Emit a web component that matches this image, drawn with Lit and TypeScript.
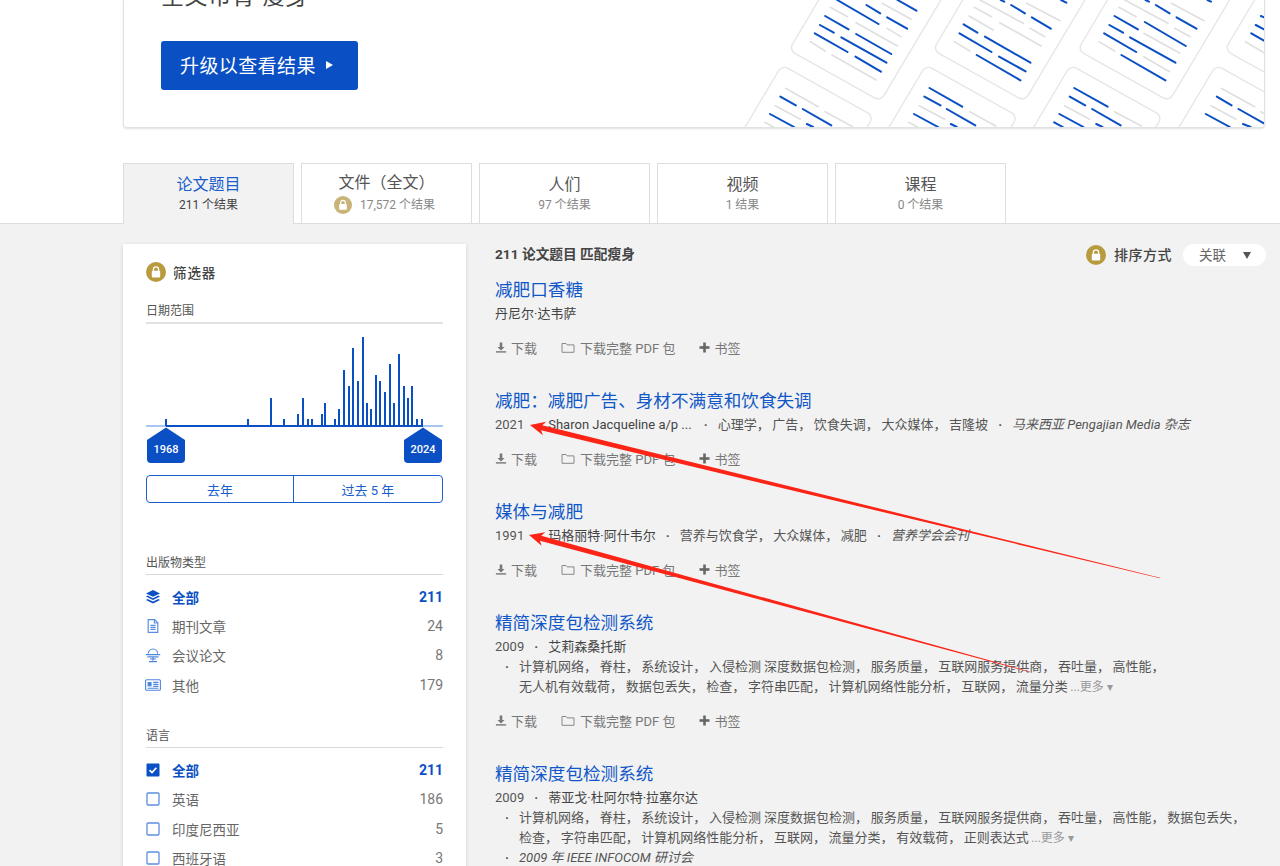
import {html, css, svg, LitElement} from 'lit';
import {customElement} from 'lit/decorators.js';

const BLUE = '#0a4fc4';

// [x, height] of the date histogram, x measured from the left of the panel content
const BARS = [
	[20, 7], [102, 7], [125, 28], [138, 7], [152, 12], [157, 28], [162, 7], [166, 7],
	[176, 12], [179, 23], [189, 7], [193, 17], [198, 56], [203, 40], [207, 78], [212, 45],
	[217, 89], [221, 23], [225, 17], [230, 51], [234, 45], [239, 34], [244, 62], [248, 23],
	[253, 72], [258, 40], [262, 28], [266, 40], [271, 7], [276, 7],
];

// hero pattern, in a 1524x381 box
const CARDS = [
	[145, 150, -400], [563, 150, -400], [983, 150, -400], [1410, 150, -400],
	[125, 195, 0], [543, 195, 0], [963, 195, 0], [1385, 195, 0],
];
const GREY_LINES = [
	[265, 22, 315, 50], [415, 10, 500, 58], [340, 68, 460, 138], [430, 85, 470, 110], [207, 125, 250, 153], [270, 165, 398, 240],
	[700, 0, 825, 70], [835, 10, 932, 62], [683, 22, 733, 50], [668, 48, 738, 90], [757, 68, 877, 138], [845, 85, 888, 110], [625, 125, 670, 153],
	[1103, 22, 1153, 50], [1255, 10, 1350, 62], [1045, 125, 1090, 153], [1175, 100, 1280, 160], [1175, 170, 1250, 215], [1265, 85, 1310, 110], [1120, 0, 1245, 70],
	[1470, 125, 1524, 158],
	[135, 265, 230, 320], [105, 317, 178, 358], [250, 335, 330, 380], [75, 367, 100, 381],
	[523, 317, 597, 358], [670, 335, 745, 378], [492, 367, 518, 381],
	[945, 317, 1018, 358], [1090, 335, 1168, 378],
	[1400, 265, 1497, 320], [1370, 317, 1443, 358], [1515, 335, 1524, 340],
];
const BLUE_LINES = [
	[285, 0, 405, 72], [370, 15, 410, 40], [460, 0, 515, 32], [430, 52, 488, 86], [250, 48, 318, 88], [235, 75, 275, 98],
	[220, 100, 315, 156], [340, 102, 442, 162], [297, 112, 428, 188], [338, 170, 412, 215],
	[790, 15, 830, 40], [850, 52, 905, 86], [652, 73, 692, 98], [640, 100, 733, 156], [714, 110, 846, 188], [755, 170, 832, 214], [690, 165, 817, 241], [760, 0, 770, 5], [935, 0, 950, 8],
	[1210, 15, 1250, 40], [1270, 52, 1328, 86], [1090, 48, 1158, 88], [1075, 75, 1115, 98], [1060, 100, 1153, 156], [1178, 66, 1297, 138], [1135, 112, 1267, 188], [1110, 165, 1238, 241], [1360, 0, 1370, 5], [1180, 0, 1190, 5],
	[1515, 48, 1524, 52], [1500, 75, 1524, 88], [1487, 100, 1524, 122],
	[120, 290, 165, 316], [185, 327, 268, 376], [90, 342, 160, 381], [197, 372, 215, 381],
	[553, 264, 648, 320], [538, 290, 585, 316], [603, 327, 686, 376], [508, 342, 578, 381], [615, 372, 632, 381],
	[973, 264, 1070, 320], [960, 290, 1005, 316], [1025, 327, 1108, 376], [930, 342, 1000, 381], [1037, 372, 1055, 381], [915, 367, 940, 381],
	[1387, 290, 1430, 316], [1450, 327, 1524, 370], [1355, 342, 1425, 381], [1463, 372, 1485, 381],
];

const TABS = [
	{label: '论文题目', sub: '211 个结果', active: true},
	{label: '文件（全文）', sub: '17,572 个结果', lock: true},
	{label: '人们', sub: '97 个结果'},
	{label: '视频', sub: '1 结果'},
	{label: '课程', sub: '0 个结果'},
];

const TYPES = [
	{icon: 'layers', label: '全部', count: 211, on: true},
	{icon: 'doc', label: '期刊文章', count: 24},
	{icon: 'conf', label: '会议论文', count: 8},
	{icon: 'news', label: '其他', count: 179},
];
const LANGS = [
	{icon: 'checked', label: '全部', count: 211, on: true},
	{icon: 'box', label: '英语', count: 186},
	{icon: 'box', label: '印度尼西亚', count: 5},
	{icon: 'box', label: '西班牙语', count: 3},
];

const KW_A = ['计算机网络', '脊柱', '系统设计', '入侵检测 深度数据包检测', '服务质量', '互联网服务提供商', '吞吐量', '高性能', '无人机有效载荷', '数据包丢失', '检查', '字符串匹配', '计算机网络性能分析', '互联网'];
const KW_B = ['计算机网络', '脊柱', '系统设计', '入侵检测 深度数据包检测', '服务质量', '互联网服务提供商', '吞吐量', '高性能', '数据包丢失', '检查', '字符串匹配', '计算机网络性能分析', '互联网', '流量分类', '有效载荷'];

function lock(size: number, color = '#b89b3f') {
	return html`<svg class="lock" width=${size} height=${size} viewBox="0 0 20 20">
		<circle cx="10" cy="10" r="10" fill=${color}></circle>
		<path d="M7.4 9V7.4a2.6 2.6 0 0 1 5.2 0V9" fill="none" stroke="#fff" stroke-width="1.3"></path>
		<rect x="5.8" y="8.8" width="8.4" height="6.6" rx="1" fill="#fff"></rect>
	</svg>`;
}

function sideIcon(name: string) {
	if (name === 'layers') return html`<svg class="si" viewBox="0 0 16 16" fill=${BLUE}>
		<path d="M8 1l7 3.4L8 7.8 1 4.4z"></path>
		<path d="M2.6 6.6L8 9.2l5.4-2.6L15 7.6l-7 3.4-7-3.4z"></path>
		<path d="M2.6 9.9L8 12.5l5.4-2.6 1.6 1-7 3.5-7-3.5z"></path>
	</svg>`;
	if (name === 'doc') return html`<svg class="si" viewBox="0 0 16 16" fill="none" stroke="#5c8ee0" stroke-width="1.2">
		<path d="M3.2 1.6h6.4l3.2 3.2v9.6H3.2z"></path>
		<path d="M9.4 1.6v3.4h3.4M5.4 7.4h5.2M5.4 9.4h5.2M5.4 11.4h5.2"></path>
	</svg>`;
	if (name === 'conf') return html`<svg class="si" viewBox="0 0 16 16" fill="none" stroke="#4f86dd" stroke-width="1.2">
		<path d="M3.4 6.6a4.6 4.6 0 0 1 9.2 0"></path>
		<path d="M.8 7.6h14.4M2.4 9.8h11.2M8 9.8v4M4 14.6h8M5 12h6"></path>
	</svg>`;
	if (name === 'news') return html`<svg class="si" viewBox="0 0 16 16" fill="none" stroke="#4f86dd" stroke-width="1.1">
		<rect x=".6" y="2.8" width="14.8" height="10.4" rx="1"></rect>
		<rect x="2.6" y="5" width="4" height="4.4" fill="#4f86dd" stroke="none"></rect>
		<path d="M8.2 5.4h5.2M8.2 7.4h5.2M8.2 9.4h5.2M2.6 11.3h10.8"></path>
	</svg>`;
	if (name === 'checked') return html`<svg class="si" viewBox="0 0 16 16">
		<rect x="1.5" y="1.5" width="13" height="13" rx="1" fill=${BLUE}></rect>
		<path d="M4.6 8.2l2.4 2.4 4.4-4.8" fill="none" stroke="#fff" stroke-width="1.7"></path>
	</svg>`;
	return html`<svg class="si" viewBox="0 0 16 16">
		<rect x="2" y="2" width="12" height="12" rx="1" fill="none" stroke="#5c8ee0" stroke-width="1.3"></rect>
	</svg>`;
}

const dlIcon = html`<svg class="ai" width="12" height="13" viewBox="0 0 12 13" fill="#777">
	<path d="M4.7 1.5h2.6v4.4h2.2L6 9.4 2.5 5.9h2.2z"></path><rect x=".9" y="10.2" width="10.2" height="1.4"></rect>
</svg>`;
const folderIcon = html`<svg class="ai fold" width="14" height="13" viewBox="0 0 14 13" fill="none" stroke="#888" stroke-width="1">
	<path d="M1 2.5h4l1.2 1.4H13v7.4H1z"></path>
</svg>`;
const plusIcon = html`<svg class="ai" width="11" height="11" viewBox="0 0 11 11" fill="#666">
	<rect x="4.2" y=".5" width="2.6" height="10"></rect><rect x=".5" y="4.2" width="10" height="2.6"></rect>
</svg>`;

// tapered arrow: broad at the tip, a hair at the tail
function arrow(tx: number, ty: number, ex: number, ey: number) {
	const len = Math.hypot(ex - tx, ey - ty);
	const ux = (ex - tx) / len, uy = (ey - ty) / len;
	const nx = -uy, ny = ux;
	const bx = tx + ux * 15, by = ty + uy * 15;
	const nk = tx + ux * 12, nl = ty + uy * 12;
	const p = (x: number, y: number, w: number) => `${x + nx * w},${y + ny * w}`;
	const pts = [`${tx},${ty}`, p(bx, by, 7), p(nk, nl, 2.6), p(ex, ey, 0.3), p(ex, ey, -0.3), p(nk, nl, -2.6), p(bx, by, -7)];
	return svg`<polygon points=${pts.join(' ')} fill="#fb2416"></polygon>`;
}

@customElement('app-root')
export class AppRoot extends LitElement {
	static styles = css`
		:host {
			display: block;
			position: relative;
			width: 1280px;
			height: 866px;
			overflow: hidden;
			background: #fff;
			font-family: Roboto, "Noto Sans CJK SC", sans-serif;
			font-size: 13px;
			color: #555;
			text-spacing-trim: space-all;
		}
		.hero {
			box-sizing: border-box;
			display: flex;
			justify-content: space-between;
			align-items: flex-end;
			width: 1142px;
			height: 128px;
			margin-left: 123px;
			border: 1px solid #e2e2e2;
			border-top: 0;
			border-radius: 0 0 4px 4px;
			box-shadow: 0 1px 2px rgba(0, 0, 0, 0.12);
			overflow: hidden;
		}
		.hero-left {
			align-self: flex-start;
			margin-left: 37px;
		}
		.hero-title {
			margin-top: -18px;
			font-size: 23px;
			letter-spacing: 0.6px;
			line-height: 30px;
			color: #444;
		}
		.upgrade {
			display: flex;
			align-items: center;
			gap: 10px;
			box-sizing: border-box;
			width: 197px;
			height: 49px;
			margin-top: 29px;
			padding: 0 0 2px 19px;
			background: #0a4fc4;
			border-radius: 3px;
			color: #fff;
			font-size: 19px;
			letter-spacing: 0.4px;
		}
		.pattern {
			display: block;
			flex: none;
		}
		.tabs {
			display: flex;
			gap: 7px;
			margin: 35px 0 0 123px;
			height: 60px;
		}
		.tab {
			box-sizing: border-box;
			width: 171px;
			height: 60px;
			display: flex;
			flex-direction: column;
			align-items: center;
			padding-top: 10px;
			border: 1px solid #ddd;
			border-bottom: 0;
			background: #fff;
		}
		.tab.locked {
			padding-top: 8px;
			gap: 2px;
		}
		.tab.active {
			background: #f2f2f2;
			height: 61px;
			position: relative;
			z-index: 1;
		}
		.tab-label {
			font-size: 16px;
			line-height: 22px;
			color: #555;
		}
		.active .tab-label {
			color: #1a5ecb;
		}
		.tab-sub {
			display: flex;
			align-items: center;
			gap: 8px;
			font-size: 12px;
			line-height: 18px;
			color: #888;
		}
		.locked .tab-sub {
			margin-left: -4px;
		}
		.active .tab-sub {
			color: #444;
		}
		.main {
			display: flex;
			gap: 29px;
			height: 643px;
			padding: 20px 0 0 123px;
			background: #f2f2f2;
			border-top: 1px solid #ddd;
			box-sizing: border-box;
		}
		.panel {
			box-sizing: border-box;
			flex: none;
			width: 343px;
			height: 700px;
			padding: 18px 23px 0;
			background: #fff;
			box-shadow: 0 1px 4px rgba(0, 0, 0, 0.14);
		}
		.filter-head {
			display: flex;
			align-items: center;
			gap: 7px;
			height: 20px;
			margin-bottom: 20px;
			font-size: 13.5px;
			letter-spacing: 0.9px;
			font-weight: 500;
			color: #444;
		}
		.heading {
			font-size: 12px;
			line-height: 18px;
			color: #555;
			padding-bottom: 2px;
			border-bottom: 1px solid #d8d8d8;
		}
		.heading.date {
			border-bottom: 2px solid #e2e2e2;
		}
		.chart {
			display: block;
			margin-bottom: 9px;
		}
		.chart text {
			font-size: 11px;
			font-weight: 500;
			fill: #fff;
			text-anchor: middle;
		}
		.ranges {
			display: flex;
			box-sizing: border-box;
			height: 28px;
			margin-bottom: 51px;
			border: 1px solid #1a5ecb;
			border-radius: 4px;
			color: #1a5ecb;
			font-size: 13px;
		}
		.ranges span {
			display: flex;
			align-items: center;
			justify-content: center;
		}
		.ranges span:first-child {
			width: 147px;
			box-sizing: border-box;
			border-right: 1px solid #1a5ecb;
		}
		.ranges span:last-child {
			flex: 1;
		}
		.list {
			margin: 7px 0 28px;
			font-size: 13.5px;
		}
		.row {
			display: flex;
			align-items: center;
			height: 29.33px;
			color: #666;
		}
		.row.on {
			color: #0a4fc4;
			font-weight: 700;
		}
		.si {
			flex: none;
			width: 16px;
			height: 16px;
			margin: 0 11px 0 -1px;
		}
		.count {
			margin-left: auto;
			color: #777;
			font-size: 14px;
		}
		.on .count {
			color: #0a4fc4;
		}
		.results {
			width: 771px;
			flex: none;
		}
		.results-head {
			display: flex;
			justify-content: space-between;
			height: 22px;
			margin-bottom: 10px;
		}
		.match {
			font-size: 13.7px;
			font-weight: 700;
			line-height: 20px;
			color: #444;
		}
		.sort {
			display: flex;
			align-items: center;
			gap: 8px;
			color: #444;
			font-size: 14px;
			letter-spacing: 0.5px;
			font-weight: 500;
			line-height: 20px;
		}
		.pill {
			display: flex;
			align-items: center;
			justify-content: space-between;
			box-sizing: border-box;
			width: 83px;
			height: 22px;
			margin-left: 3px;
			padding: 0 15px 0 16px;
			background: #fff;
			border-radius: 11px;
			color: #666;
			font-size: 13.5px;
			letter-spacing: 0;
			font-weight: 400;
		}
		.caret {
			width: 0;
			height: 0;
			border: 4px solid transparent;
			border-top: 7px solid #555;
			border-bottom: 0;
		}
		.item {
			margin-bottom: 29px;
		}
		.title {
			box-sizing: border-box;
			height: 26px;
			padding-top: 2px;
			font-size: 17.6px;
			line-height: 25px;
			color: #1057c8;
		}
		.meta {
			box-sizing: border-box;
			height: 22px;
			padding-top: 1px;
			line-height: 22px;
			color: #555;
			white-space: nowrap;
		}
		.dot {
			display: inline-block;
			width: 24px;
			text-align: center;
			font-weight: 700;
		}
		.author {
			color: #444;
		}
		.author.cut {
			padding-right: 2px;
		}
		.kw {
			display: inline-block;
			margin-right: 2.6px;
			white-space: nowrap;
		}
		.italic {
			font-style: italic;
		}
		.block {
			display: flex;
			line-height: 20px;
			width: 755px;
		}
		.block .dot {
			flex: none;
		}
		.more {
			color: #999;
			font-size: 12px;
			white-space: nowrap;
		}
		.actions {
			display: flex;
			gap: 24px;
			height: 22px;
			margin-top: 12px;
			color: #777;
		}
		.action {
			display: flex;
			align-items: center;
			gap: 4px;
		}
		.fold {
			margin-right: 1px;
		}
		.arrows {
			position: absolute;
			left: 0;
			top: 0;
			pointer-events: none;
		}
	`;

	renderPattern() {
		return html`<svg class="pattern" width="525" height="127" viewBox="0 0 1524 381" preserveAspectRatio="none">
			${CARDS.map(([x, y, top]) => svg`<rect x="0" y=${top} width="307" height="400" rx="20" fill="#fff" stroke="#e6e6e6" stroke-width="4"
				transform="translate(${x} ${y}) rotate(30)"></rect>`)}
			${GREY_LINES.map(([a, b, c, d]) => svg`<line x1=${a} y1=${b} x2=${c} y2=${d} stroke="#e0e0e0" stroke-width="5" stroke-linecap="round"></line>`)}
			${BLUE_LINES.map(([a, b, c, d]) => svg`<line x1=${a} y1=${b} x2=${c} y2=${d} stroke=${BLUE} stroke-width="6" stroke-linecap="round"></line>`)}
		</svg>`;
	}

	renderChart() {
		return html`<svg class="chart" width="297" height="142" viewBox="0 0 297 142">
			<rect x="0" y="101" width="297" height="2" fill="#a9c5f2"></rect>
			<rect x="20" y="101" width="257" height="2" fill=${BLUE}></rect>
			${BARS.map(([x, h]) => svg`<rect x=${x - 1} y=${102 - h} width="2" height=${h} fill=${BLUE}></rect>`)}
			<path d="M20 103.5L39 116v19a4 4 0 0 1-4 4H5a4 4 0 0 1-4-4V116z" fill=${BLUE}></path>
			<path d="M277 103.5L296 116v19a4 4 0 0 1-4 4h-30a4 4 0 0 1-4-4V116z" fill=${BLUE}></path>
			<text x="20" y="129">1968</text>
			<text x="277" y="129">2024</text>
		</svg>`;
	}

	renderRows(rows: typeof TYPES) {
		return html`<div class="list">
			${rows.map((r) => html`<div class="row ${r.on ? 'on' : ''}">
				${sideIcon(r.icon)}<span>${r.label}</span><span class="count">${r.count}</span>
			</div>`)}
		</div>`;
	}

	renderActions() {
		return html`<div class="actions">
			<span class="action">${dlIcon}下载</span>
			<span class="action">${folderIcon}下载完整 PDF 包</span>
			<span class="action">${plusIcon}书签</span>
		</div>`;
	}

	renderKeywords(list: string[]) {
		return list.map((k) => html`<span class="kw">${k}，</span>`);
	}

	render() {
		return html`
			<div class="hero">
				<div class="hero-left">
					<div class="hero-title">全文市青 瘦身</div>
					<div class="upgrade">升级以查看结果
						<svg width="7" height="8" viewBox="0 0 7 8"><path d="M0 0l7 4-7 4z" fill="#fff"></path></svg>
					</div>
				</div>
				${this.renderPattern()}
			</div>

			<div class="tabs">
				${TABS.map((t) => html`<div class="tab ${t.active ? 'active' : ''} ${t.lock ? 'locked' : ''}">
					<div class="tab-label">${t.label}</div>
					<div class="tab-sub">${t.lock ? lock(18, '#c9b478') : ''}${t.sub}</div>
				</div>`)}
			</div>

			<div class="main">
				<div class="panel">
					<div class="filter-head">${lock(20)}筛选器</div>
					<div class="heading date">日期范围</div>
					${this.renderChart()}
					<div class="ranges"><span>去年</span><span>过去 5 年</span></div>
					<div class="heading">出版物类型</div>
					${this.renderRows(TYPES)}
					<div class="heading">语言</div>
					${this.renderRows(LANGS)}
				</div>

				<div class="results">
					<div class="results-head">
						<div class="match">211 论文题目 匹配瘦身</div>
						<div class="sort">${lock(20)}排序方式<div class="pill">关联<span class="caret"></span></div></div>
					</div>

					<div class="item">
						<div class="title">减肥口香糖</div>
						<div class="meta"><span class="author">丹尼尔·达韦萨</span></div>
						${this.renderActions()}
					</div>

					<div class="item">
						<div class="title">减肥：减肥广告、身材不满意和饮食失调</div>
						<div class="meta">2021<span class="dot">·</span><span class="author cut">Sharon Jacqueline a/p ...</span><span class="dot">·</span><span class="kw">心理学，</span><span class="kw">广告，</span><span class="kw">饮食失调，</span><span class="kw">大众媒体，</span>吉隆坡<span class="dot">·</span><span class="italic">马来西亚 Pengajian Media 杂志</span></div>
						${this.renderActions()}
					</div>

					<div class="item">
						<div class="title">媒体与减肥</div>
						<div class="meta">1991<span class="dot">·</span><span class="author">玛格丽特·阿什韦尔</span><span class="dot">·</span><span class="kw">营养与饮食学，</span><span class="kw">大众媒体，</span>减肥<span class="dot">·</span><span class="italic">营养学会会刊</span></div>
						${this.renderActions()}
					</div>

					<div class="item">
						<div class="title">精简深度包检测系统</div>
						<div class="meta">2009<span class="dot">·</span><span class="author">艾莉森桑托斯</span></div>
						<div class="blocks">
							<div class="block"><span class="dot">·</span><div>${this.renderKeywords(KW_A)}<span class="kw">流量分类</span><span class="more">...更多 ▾</span></div></div>
						</div>
						${this.renderActions()}
					</div>

					<div class="item">
						<div class="title">精简深度包检测系统</div>
						<div class="meta">2009<span class="dot">·</span><span class="author">蒂亚戈·杜阿尔特·拉塞尔达</span></div>
						<div class="blocks">
							<div class="block"><span class="dot">·</span><div>${this.renderKeywords(KW_B)}<span class="kw">正则表达式</span><span class="more">...更多 ▾</span></div></div>
							<div class="block"><span class="dot">·</span><div class="italic">2009 年 IEEE INFOCOM 研讨会</div></div>
						</div>
					</div>
				</div>
			</div>

			<svg class="arrows" width="1280" height="866" viewBox="0 0 1280 866">
				${arrow(530, 425, 1160, 578)}
				${arrow(529, 535, 1030, 672)}
			</svg>
		`;
	}
}
